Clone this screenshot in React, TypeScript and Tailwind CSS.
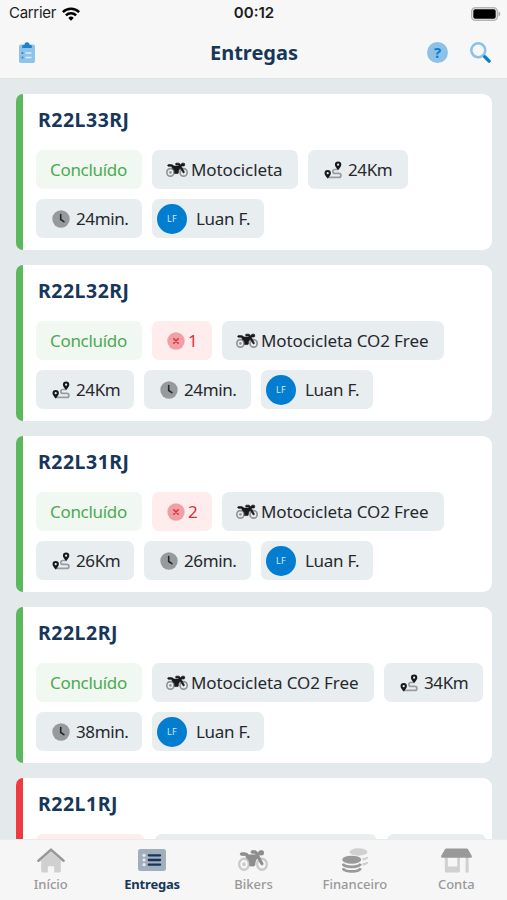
import type { ReactNode } from 'react'
import clsx from 'clsx'

type ChipKind = 'done' | 'cancelled' | 'errors' | 'vehicle' | 'distance' | 'time' | 'biker'

type Chip = {
  kind: ChipKind
  label?: string
  size: string
}

type Delivery = {
  code: string
  cancelled?: boolean
  chips: Chip[]
}

const DELIVERIES: Delivery[] = [
  {
    code: 'R22L33RJ',
    chips: [
      { kind: 'done', label: 'Concluído', size: 'w-[106px]' },
      { kind: 'vehicle', label: 'Motocicleta', size: 'w-[146px]' },
      { kind: 'distance', label: '24Km', size: 'w-[100px]' },
      { kind: 'time', label: '24min.', size: 'w-[106px]' },
      { kind: 'biker', label: 'Luan F.', size: 'w-[112px]' },
    ],
  },
  {
    code: 'R22L32RJ',
    chips: [
      { kind: 'done', label: 'Concluído', size: 'w-[106px]' },
      { kind: 'errors', label: '1', size: 'w-[60px]' },
      { kind: 'vehicle', label: 'Motocicleta CO2 Free', size: 'w-[222px]' },
      { kind: 'distance', label: '24Km', size: 'w-[98px]' },
      { kind: 'time', label: '24min.', size: 'w-[107px]' },
      { kind: 'biker', label: 'Luan F.', size: 'w-[112px]' },
    ],
  },
  {
    code: 'R22L31RJ',
    chips: [
      { kind: 'done', label: 'Concluído', size: 'w-[106px]' },
      { kind: 'errors', label: '2', size: 'w-[60px]' },
      { kind: 'vehicle', label: 'Motocicleta CO2 Free', size: 'w-[222px]' },
      { kind: 'distance', label: '26Km', size: 'w-[98px]' },
      { kind: 'time', label: '26min.', size: 'w-[107px]' },
      { kind: 'biker', label: 'Luan F.', size: 'w-[112px]' },
    ],
  },
  {
    code: 'R22L2RJ',
    chips: [
      { kind: 'done', label: 'Concluído', size: 'w-[106px]' },
      { kind: 'vehicle', label: 'Motocicleta CO2 Free', size: 'w-[222px]' },
      { kind: 'distance', label: '34Km', size: 'w-[99px]' },
      { kind: 'time', label: '38min.', size: 'w-[106px]' },
      { kind: 'biker', label: 'Luan F.', size: 'w-[112px]' },
    ],
  },
  {
    code: 'R22L1RJ',
    cancelled: true,
    chips: [
      { kind: 'cancelled', size: 'w-[109px]' },
      { kind: 'vehicle', size: 'w-[222px]' },
      { kind: 'distance', size: 'w-[99px]' },
    ],
  },
]

const CHIP_COLORS: Record<ChipKind, string> = {
  done: 'bg-[#f0f8f1] text-[#4caa50]',
  cancelled: 'bg-[#ffeced] text-[#e0323f]',
  errors: 'bg-[#ffeced] text-[#dc2f3f]',
  vehicle: 'bg-[#e8edf0] text-[#26292c]',
  distance: 'bg-[#e8edf0] text-[#26292c]',
  time: 'bg-[#e8edf0] text-[#26292c]',
  biker: 'bg-[#e8edf0] text-[#26292c]',
}

function MotorcycleIcon({ className }: { className?: string }) {
  return (
    <svg viewBox="0 32 640 416" preserveAspectRatio="none" className={className} fill="none">
      <g stroke="currentColor" strokeOpacity="0.42" strokeWidth="48">
        <circle cx="128" cy="320" r="104" />
        <circle cx="512" cy="320" r="104" />
      </g>
      <circle cx="128" cy="320" r="38" fill="currentColor" fillOpacity="0.42" />
      <path
        d="M72 104h56c55 0 82 17 100 40h154l-19-32h-67c-9 0-16-7-16-16V80c0-9 7-16 16-16h80c8 0 16 4 20 11l23 39 38-42c5-5 11-8 18-8h45c13 0 24 11 24 24v32c0 13-11 24-24 24h-82l94 156c7 12 3 26-8 33-11 6-26 3-33-8L416 202c-39 31-58 78-56 125 1 14-10 25-24 25h-84c7-64-18-120-77-153l1-22c-9-14-23-25-48-25H72c-13 0-24-11-24-24s11-24 24-24z"
        fill="currentColor"
        stroke="currentColor"
        strokeWidth="18"
        strokeLinejoin="round"
      />
    </svg>
  )
}

function RouteIcon() {
  return (
    <svg viewBox="0 0 18 18" className="h-[18px] w-[18px]" fill="none">
      <path
        d="M13.8 8.5h-3a1.9 1.9 0 0 0 0 3.9h4.1a2 2 0 0 1 0 4H4.2"
        stroke="#9a9d9f"
        strokeWidth="1.7"
        strokeLinecap="round"
      />
      <path
        fillRule="evenodd"
        d="M14.1.5a3.2 3.2 0 0 0-3.2 3.2c0 1.5 1.7 3.6 3.2 5.3 1.5-1.7 3.2-3.8 3.2-5.3A3.2 3.2 0 0 0 14.1.5zm0 2.1a1.1 1.1 0 1 1 0 2.2 1.1 1.1 0 0 1 0-2.2z"
        fill="#171a1c"
      />
      <path
        fillRule="evenodd"
        d="M3.7 9a3.2 3.2 0 0 0-3.2 3.2c0 1.5 1.7 3.6 3.2 5.3 1.5-1.7 3.2-3.8 3.2-5.3A3.2 3.2 0 0 0 3.7 9zm0 2.1a1.1 1.1 0 1 1 0 2.2 1.1 1.1 0 0 1 0-2.2z"
        fill="#171a1c"
      />
    </svg>
  )
}

function ClockIcon() {
  return (
    <svg viewBox="0 0 18 18" className="h-[18px] w-[18px]" fill="none">
      <circle cx="9" cy="9" r="8.7" fill="#969a9c" />
      <path d="M8.7 4.5v5l3.2 2.2" stroke="#222527" strokeWidth="1.6" strokeLinecap="round" />
    </svg>
  )
}

function ErrorIcon() {
  return (
    <svg viewBox="0 0 18 18" className="h-[18px] w-[18px]" fill="none">
      <circle cx="9" cy="9" r="8.7" fill="#f0a0a5" />
      <path d="M6.8 6.8l4.4 4.4M11.2 6.8l-4.4 4.4" stroke="#da3540" strokeWidth="1.6" strokeLinecap="round" />
    </svg>
  )
}

function ChipView({ chip }: { chip: Chip }) {
  const { kind, label, size } = chip
  return (
    <div
      className={clsx(
        'flex h-[39px] shrink-0 items-center rounded-[7px] whitespace-nowrap',
        size,
        CHIP_COLORS[kind],
        (kind === 'done' || kind === 'cancelled') && 'justify-center pr-px',
        kind === 'vehicle' && 'gap-[3px] pl-[14px] tracking-[-0.1px]',
        (kind === 'distance' || kind === 'time') && 'gap-[6px] pl-4 tracking-[-0.4px]',
        kind === 'errors' && 'gap-[3px] pl-[15px]',
        kind === 'biker' && 'gap-[9px] pl-[5px]',
      )}
    >
      {kind === 'vehicle' && <MotorcycleIcon className="h-[15px] w-[22px] text-[#17191b]" />}
      {kind === 'distance' && <RouteIcon />}
      {kind === 'time' && <ClockIcon />}
      {kind === 'errors' && <ErrorIcon />}
      {kind === 'biker' && (
        <div className="flex h-[30px] w-[30px] items-center justify-center rounded-full bg-[#037dd0] text-[9px] tracking-[0.4px] text-[#d5e9f8]">
          LF
        </div>
      )}
      {label && <span>{label}</span>}
    </div>
  )
}

function DeliveryCard({ delivery }: { delivery: Delivery }) {
  return (
    <div className="flex h-[156px] shrink-0">
      <div
        className={clsx('w-[7px] rounded-l-[9px]', delivery.cancelled ? 'bg-[#ef3b40]' : 'bg-[#5cb85c]')}
      />
      <div className="flex-1 rounded-r-[9px] bg-white pl-[13px]">
        <h2 className="flex h-[56px] items-center pb-1 pl-[2px] text-[19.5px] font-bold tracking-[0.5px] text-[#17375a]">
          {delivery.code}
        </h2>
        <div className="flex flex-wrap gap-[10px] text-[17px] tracking-[-0.3px]">
          {delivery.chips.map((chip) => (
            <ChipView key={chip.kind} chip={chip} />
          ))}
        </div>
      </div>
    </div>
  )
}

function StatusBar() {
  return (
    <div className="flex h-[27px] items-center justify-between pr-[6px] pl-[9px] font-['Inter'] text-[15px] text-[#1c1c1c]">
      <div className="flex w-[150px] items-center gap-[6px] tracking-[-0.3px]">
        <span>Carrier</span>
        <svg viewBox="0 0 18 14" className="h-[14px] w-[18px]" fill="none" stroke="#000" strokeWidth="2.5">
          <path d="M.9 5.2a11.5 11.5 0 0 1 16.2 0M3.9 8.3a7.2 7.2 0 0 1 10.2 0" />
          <path d="M9 13.7l2.7-2.8a3.8 3.8 0 0 0-5.4 0z" fill="#000" stroke="none" />
        </svg>
      </div>
      <span className="-ml-[2px] font-semibold">00:12</span>
      <div className="flex w-[150px] justify-end">
        <svg viewBox="0 0 30 14" className="h-[14px] w-[30px]">
          <rect x=".7" y=".7" width="25.6" height="12.6" rx="3.6" fill="none" stroke="#b4b4b4" strokeWidth="1.4" />
          <rect x="2.3" y="2.3" width="22.4" height="9.4" rx="1.8" fill="#000" />
          <path d="M27.5 4.6c1.1.4 1.8 1.3 1.8 2.4s-.7 2-1.8 2.4z" fill="#a8a8a8" />
        </svg>
      </div>
    </div>
  )
}

function Header() {
  return (
    <header className="shrink-0 border-b border-[#dfe3e5] bg-[#f7f7f8]">
      <StatusBar />
      <div className="flex h-[51px] items-center justify-between pr-4 pl-[19px]">
        <div className="flex w-[72px]">
          <svg viewBox="0 0 16 21" className="h-[21px] w-[16px]">
            <rect x="0" y="2.5" width="16" height="18.5" rx="1.8" fill="#8fc4ea" />
            <path
              d="M3.2 6V4.2c0-.7.5-1.2 1.2-1.2h1.1A2.6 2.6 0 0 1 8 .2a2.6 2.6 0 0 1 2.5 2.8h1.1c.7 0 1.2.5 1.2 1.2V6z"
              fill="#1f80cc"
            />
            <g fill="#1f80cc">
              <circle cx="3.5" cy="11" r="1" />
              <circle cx="3.5" cy="15.5" r="1" />
            </g>
            <path d="M6.5 10.3h6v1.5h-6zM6.5 14.8h6v1.5h-6z" fill="#d9edf9" />
          </svg>
        </div>
        <h1 className="-ml-[2px] text-[20px] font-bold text-[#17375a]">Entregas</h1>
        <div className="flex w-[72px] items-center justify-end gap-[22px]">
          <div className="flex h-[21px] w-[21px] shrink-0 items-center justify-center rounded-full bg-[#8dc1e8] text-[15px] font-bold text-[#0f7bcb]">
            ?
          </div>
          <svg viewBox="0 0 21 21" className="h-[21px] w-[21px] shrink-0" fill="none">
            <circle cx="8.3" cy="8.3" r="7" stroke="#8dc1e8" strokeWidth="2.6" />
            <path d="M14.8 14.8l4.3 4.3" stroke="#0f7bcb" strokeWidth="3.4" strokeLinecap="round" />
          </svg>
        </div>
      </div>
    </header>
  )
}

function HomeIcon() {
  return (
    <svg viewBox="0 0 28 25" className="h-[25px] w-[28px]">
      <path
        d="M14 4l9.8 8.6V23c0 .9-.5 1.4-1.4 1.4h-5.2v-6.2h-6.4v6.2H5.6c-.9 0-1.4-.5-1.4-1.4V12.6z"
        fill="#d0d0d0"
      />
      <path
        d="M1.5 12.7L14 1.7l12.5 11"
        fill="none"
        stroke="#999"
        strokeWidth="2.6"
        strokeLinecap="round"
        strokeLinejoin="round"
      />
    </svg>
  )
}

function ListIcon() {
  return (
    <svg viewBox="0 0 28 22" className="h-[22px] w-[28px]">
      <rect width="28" height="22" rx="2.5" fill="#a1afbc" />
      <path
        d="M10.8 6.3h11.3M10.8 11h11.3M10.8 15.7h11.3"
        stroke="#17375a"
        strokeWidth="2.3"
        strokeLinecap="round"
      />
      <g fill="#e5eaf0">
        <circle cx="6" cy="6.3" r="1.6" />
        <circle cx="6" cy="11" r="1.6" />
        <circle cx="6" cy="15.7" r="1.6" />
      </g>
    </svg>
  )
}

function CoinsIcon() {
  return (
    <svg viewBox="0 0 26 25" className="h-[25px] w-[26px]" fill="none">
      <ellipse cx="16.5" cy="4" rx="9" ry="3.7" fill="#d0d0d0" />
      <path
        d="M20.5 11.5c2.6-.4 4.7-1.3 5-2.5M20.5 16.5c2.6-.4 4.7-1.3 5-2.5"
        stroke="#d0d0d0"
        strokeWidth="2.5"
      />
      <ellipse cx="9.7" cy="11.7" rx="9.5" ry="4" fill="#999" />
      <path d="M.8 15.8c1.5 4 16.3 4 17.8 0M.8 20.2c1.5 4.3 16.3 4.3 17.8 0" stroke="#999" strokeWidth="2.7" />
    </svg>
  )
}

function StoreIcon() {
  return (
    <svg viewBox="0 0 31 25" className="h-[25px] w-[31px]">
      <path
        d="M3.8 9h3v9.500h9.400V9h2.700v14c0 .9-.5 1.400-1.400 1.400H5.200c-.9 0-1.400-.5-1.400-1.400zM24.600 9h3v15.400h-3z"
        fill="#d0d0d0"
      />
      <path
        d="M5.3.5h20.4c.6 0 1 .2 1.3.7l3.6 6.300c.6 1.100.1 2.300-1.200 2.300H1.600C.3 9.800-.2 8.600.4 7.500L4 1.200c.3-.5.7-.7 1.300-.7z"
        fill="#999"
      />
    </svg>
  )
}

type Tab = { label: string; icon: ReactNode; active?: boolean }

const TABS: Tab[] = [
  { label: 'Início', icon: <HomeIcon /> },
  { label: 'Entregas', icon: <ListIcon />, active: true },
  { label: 'Bikers', icon: <MotorcycleIcon className="h-[22px] w-[30px] text-[#8d8d8d]" /> },
  { label: 'Financeiro', icon: <CoinsIcon /> },
  { label: 'Conta', icon: <StoreIcon /> },
]

function TabBar() {
  return (
    <nav className="grid h-[61px] shrink-0 grid-cols-5 border-t border-[#ebebeb] bg-[#f6f6f6]">
      {TABS.map(({ label, icon, active }) => (
        <div key={label} className="flex flex-col items-center pt-[7px]">
          <div className="flex h-[26px] items-center">{icon}</div>
          <span
            className={clsx(
              'mt-[2px] text-[13px] leading-[18px] whitespace-nowrap',
              active ? 'font-bold tracking-[-0.2px] text-[#17375a]' : 'font-medium text-[#999]',
            )}
          >
            {label}
          </span>
        </div>
      ))}
    </nav>
  )
}

export default function App() {
  return (
    <div className="flex h-[900px] w-[507px] flex-col overflow-hidden bg-[#e4e9ec] font-['Noto_Sans',sans-serif]">
      <Header />
      <main className="flex min-h-0 flex-1 flex-col gap-[15px] overflow-hidden pt-[15px] pr-[15px] pl-4">
        {DELIVERIES.map((delivery) => (
          <DeliveryCard key={delivery.code} delivery={delivery} />
        ))}
      </main>
      <TabBar />
    </div>
  )
}
